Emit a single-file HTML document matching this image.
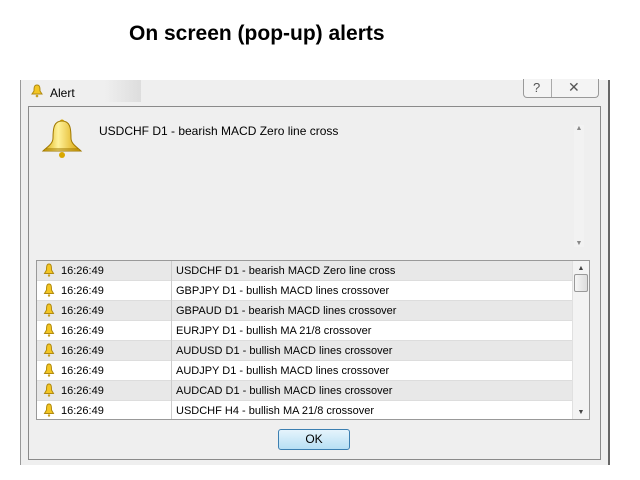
<!DOCTYPE html><html><head><style>
body{margin:0;width:640px;height:480px;background:#fff;position:relative;overflow:hidden;font-family:"Liberation Sans",sans-serif}
.a{position:absolute}
.h{left:129px;top:22px;font-size:21px;font-weight:bold;color:#000}
.win{left:20px;top:80px;width:587px;height:385px;background:#efefef;border-right:2px solid #666;border-left:1px solid #999}
.inner{left:28px;top:106px;width:571px;height:352px;border:1px solid #8a8a8a;background:#efefef}
.t{font-size:12px;color:#000}
.list{left:36px;top:260px;width:552px;height:158px;border:1px solid #999;background:#fff;overflow:hidden}
.row{position:absolute;left:0;width:535px;height:19px;border-bottom:1px solid #ddd;font-size:11px;line-height:20px}
.row .c1{position:absolute;left:24px}
.row .c2{position:absolute;left:134px;top:0;height:20px;border-left:1px solid #ccc;padding-left:4px}
.g{background:#e8e8e8}
.sb{position:absolute;right:0;top:0;width:16px;height:158px;background:#f3f3f3;border-left:1px solid #e0e0e0}
.ok{left:278px;top:429px;width:70px;height:19px;border:1px solid #3c7fb1;border-radius:3px;background:linear-gradient(#e5f4fc,#b7dff4);font-size:12px;text-align:center;line-height:19px}
</style></head><body>
<div class="a h">On screen (pop-up) alerts</div>
<div class="a win"></div>
<div class="a" style="left:21px;top:80px;width:120px;height:22px;background:linear-gradient(90deg,#efefef 70%,#ddd)"></div>
<svg class="a" style="left:30px;top:84px" width="14" height="14" viewBox="0 0 14 14"><path d="M7 1C4 1 4 4 4 7L2 10H12L10 7C10 4 10 1 7 1Z" fill="#f3c623" stroke="#b08a10"/><circle cx="7" cy="12" r="1.3" fill="#c9a020"/></svg>
<div class="a t" style="left:50px;top:86px">Alert</div>
<div class="a" style="left:523px;top:79px;width:74px;height:18px;border:1px solid #999;border-top:none;border-radius:0 0 4px 4px;background:#f4f4f4"></div>
<div class="a" style="left:551px;top:79px;width:1px;height:18px;background:#aaa"></div>
<div class="a" style="left:533px;top:80px;font-size:13px;color:#555">?</div>
<div class="a" style="left:568px;top:79px;font-size:14px;color:#555">✕</div>
<div class="a inner"></div>
<svg class="a" style="left:41px;top:118px" width="42" height="42" viewBox="0 0 42 42"><defs><linearGradient id="b" x1="0" x2="1"><stop offset="0" stop-color="#d9a800"/><stop offset=".4" stop-color="#fff29a"/><stop offset="1" stop-color="#d7a000"/></linearGradient></defs><circle cx="21" cy="4" r="2.5" fill="#d9a800"/><path d="M21 3C13 3 12 10 12 20C12 26 6 29 2 33H40C36 29 30 26 30 20C30 10 29 3 21 3Z" fill="url(#b)" stroke="#a07800"/><path d="M4 31H38" stroke="#a07800"/><circle cx="21" cy="37" r="3" fill="#d9a800"/></svg>
<div class="a t" style="left:99px;top:124px">USDCHF D1 - bearish MACD Zero line cross</div>
<div class="a" style="left:574px;top:125px;width:10px;height:122px;background:#f2f2f2;font-size:7px;color:#888;text-align:center">▲<div style="position:absolute;bottom:0;width:10px">▼</div></div>
<div class="a list">
<div class="row g" style="top:0"><span class="c1">16:26:49</span><span class="c2">USDCHF D1 - bearish MACD Zero line cross</span></div>
<div class="row" style="top:20px"><span class="c1">16:26:49</span><span class="c2">GBPJPY D1 - bullish MACD lines crossover</span></div>
<div class="row g" style="top:40px"><span class="c1">16:26:49</span><span class="c2">GBPAUD D1 - bearish MACD lines crossover</span></div>
<div class="row" style="top:60px"><span class="c1">16:26:49</span><span class="c2">EURJPY D1 - bullish MA 21/8 crossover</span></div>
<div class="row g" style="top:80px"><span class="c1">16:26:49</span><span class="c2">AUDUSD D1 - bullish MACD lines crossover</span></div>
<div class="row" style="top:100px"><span class="c1">16:26:49</span><span class="c2">AUDJPY D1 - bullish MACD lines crossover</span></div>
<div class="row g" style="top:120px"><span class="c1">16:26:49</span><span class="c2">AUDCAD D1 - bullish MACD lines crossover</span></div>
<div class="row" style="top:140px"><span class="c1">16:26:49</span><span class="c2">USDCHF H4 - bullish MA 21/8 crossover</span></div>
<svg style="position:absolute;left:5px;top:0" width="14" height="160"><g id="s"><path d="M7 3C4.5 3 4.5 6 4.5 9L2.5 12.5H11.5L9.5 9C9.5 6 9.5 3 7 3Z" fill="#f3c623" stroke="#b08a10"/><circle cx="7" cy="14.5" r="1.2" fill="#c9a020"/></g><use href="#s" y="20"/><use href="#s" y="40"/><use href="#s" y="60"/><use href="#s" y="80"/><use href="#s" y="100"/><use href="#s" y="120"/><use href="#s" y="140"/></svg>
<div class="sb"><div style="font-size:7px;color:#444;text-align:center;margin-top:4px">▲</div><div style="margin:2px 1px;height:16px;border:1px solid #999;border-radius:2px;background:linear-gradient(90deg,#f6f6f6,#ddd)"></div><div style="position:absolute;bottom:3px;width:16px;font-size:7px;color:#444;text-align:center">▼</div></div>
</div>
<div class="a ok">OK</div>
</body></html>
